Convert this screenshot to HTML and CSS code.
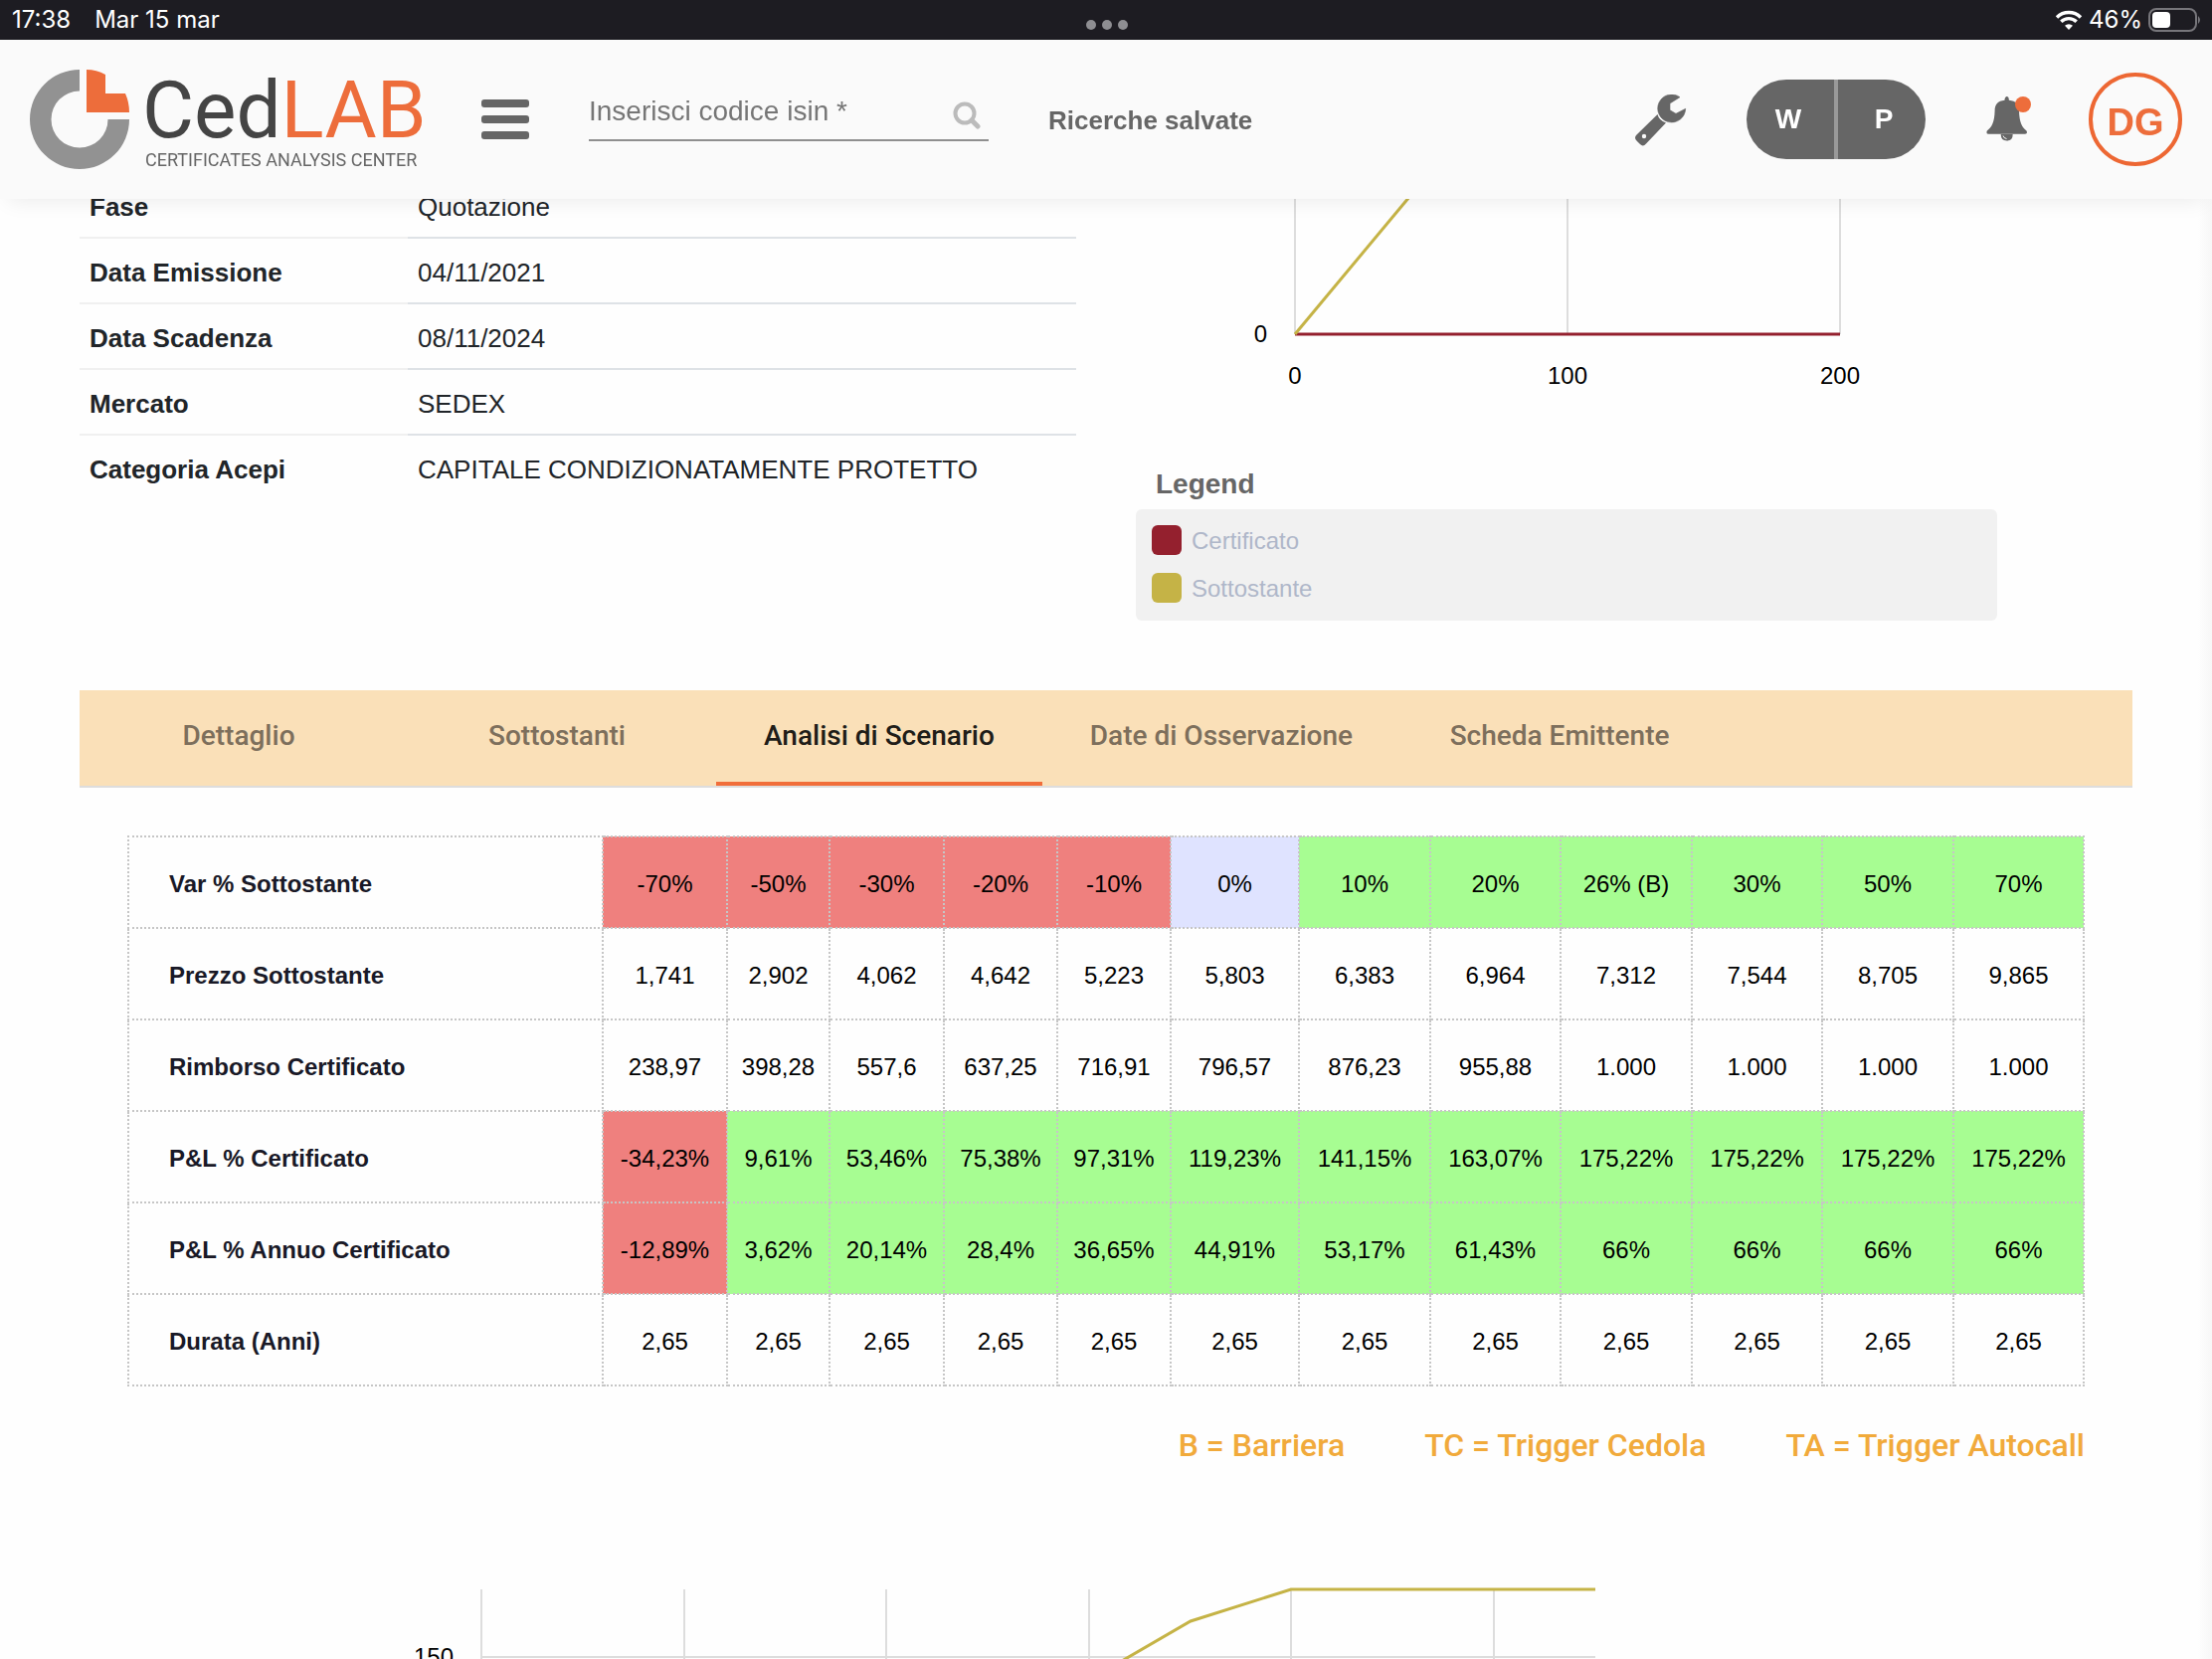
FILE: index.html
```html
<!DOCTYPE html>
<html lang="it">
<head>
<meta charset="utf-8">
<meta name="viewport" content="width=device-width, initial-scale=1">
<title>CedLAB - Analisi di Scenario</title>
<link rel="stylesheet" href="styles.css">
</head>
<body>
<div class="app">
  <div class="status">
    <div class="status-side"><span>17:38</span><span>Mar 15 mar</span></div>
    <svg class="status-dots" viewBox="0 0 44 12" aria-hidden="true"><circle cx="6" cy="6" r="5"/><circle cx="22" cy="6" r="5"/><circle cx="38" cy="6" r="5"/></svg>
    <div class="status-side status-right">
      <svg class="wifi" viewBox="0 0 28 20" aria-hidden="true"><path d="M2 7.500a17 17 0 0 1 24 0M6.300 11.800a11 11 0 0 1 15.400 0" fill="none" stroke="#fff" stroke-width="3.400"/><path d="M14 20l-4-4.200a5.800 5.800 0 0 1 8 0z" fill="#fff"/></svg>
      <span>46%</span>
      <svg class="battery" viewBox="0 0 54 24" aria-hidden="true"><rect x="1" y="1" width="47" height="22" rx="7" fill="none" stroke="#77767b" stroke-width="2"/><rect x="4" y="4" width="18" height="16" rx="4" fill="#fff"/><path d="M50 8q4 4 0 8z" fill="#77767b"/></svg>
    </div>
  </div>

  <header class="header">
    <a class="logo" href="#" aria-label="CedLAB">
      <svg class="logo-mark" viewBox="0 0 100 100" aria-hidden="true"><path d="M50 0A50 50 0 1 0 100 50H78.500A28.500 28.500 0 1 1 50 21.500z" fill="#929292"/><path d="M57 0Q67 0 76 5V24H96Q100 33 100 43H57z" fill="#ed6d3b"/></svg>
      <span class="logo-text"><span class="logo-name">Ced<b>LAB</b></span><span class="logo-tag">CERTIFICATES ANALYSIS CENTER</span></span>
    </a>
    <button class="menu" type="button" aria-label="Menu"><i></i><i></i><i></i></button>
    <form class="search">
      <input type="text" id="isin" placeholder="Inserisci codice isin *" aria-label="Inserisci codice isin">
      <button type="button" aria-label="Cerca"><svg viewBox="0 0 28 28" aria-hidden="true"><circle cx="12" cy="12" r="9.500" fill="none" stroke="#bbb" stroke-width="4"/><path d="M19 19l6 6" stroke="#bbb" stroke-width="5" stroke-linecap="round"/></svg></button>
    </form>
    <a class="saved" href="#">Ricerche salvate</a>
    <div class="tools">
      <button class="wrench" type="button" aria-label="Strumenti"><svg viewBox="0 0 52 52" aria-hidden="true"><path d="M22.500 20Q24 26 31 28.500L11 49.500q-3 3.500-6 .5l-3.500-3.500q-3-3 0-6z" fill="#666"/><circle cx="9" cy="42" r="2.200" fill="#fafafa"/><path d="M45 2.700A14 14 0 1 0 50.700 14.300L41 19.300l-6-3.600V9z" fill="#666" stroke="#666" stroke-width=".6" stroke-linejoin="round"/></svg></button>
      <div class="pill"><button type="button">W</button><button type="button">P</button></div>
      <button class="bell" type="button" aria-label="Notifiche"><svg viewBox="0 0 46 46" aria-hidden="true"><path d="M20.700 0q2 0 2.200 3.700C30 4.500 33 8 33 14.500 33.300 26 36 31 40.500 34.500q1.500 3.200-1.500 3.200H2.500q-3 0-1.700-3.200C5.500 31 8.300 26 8.600 14.500 8.600 8 11.500 4.500 18.500 3.700 18.700 0 20.700 0 20.700 0z" fill="#666"/><path d="M14.700 38q0 6.500 6 6.500t6-6.500z" fill="#666"/><path d="M17 39.500q.5 2.500 3.500 3" fill="none" stroke="#fafafa" stroke-width="1"/><circle cx="37" cy="8" r="8" fill="#ed6d3b"/></svg></button>
      <button class="avatar" type="button">DG</button>
    </div>
  </header>

  <main class="main">
    <section class="top">
      <div class="info-wrap">
        <table class="info">
          <tr><th scope="row">Fase</th><td>Quotazione</td></tr>
          <tr><th scope="row">Data Emissione</th><td>04/11/2021</td></tr>
          <tr><th scope="row">Data Scadenza</th><td>08/11/2024</td></tr>
          <tr><th scope="row">Mercato</th><td>SEDEX</td></tr>
          <tr><th scope="row">Categoria Acepi</th><td>CAPITALE CONDIZIONATAMENTE PROTETTO</td></tr>
        </table>
      </div>
      <div class="payoff">
        <svg class="chart" viewBox="0 0 866 288" role="img" aria-label="Payoff a scadenza">
          <path d="M160 0V162M434 0V162M708 0V162" stroke="#ddd" stroke-width="2"/>
          <path d="M160 162H708" stroke="#94202e" stroke-width="3"/>
          <path d="M160 162L295 0" stroke="#c5b346" stroke-width="3"/>
          <text x="132" y="170" text-anchor="end">0</text>
          <text x="160" y="212" text-anchor="middle">0</text><text x="434" y="212" text-anchor="middle">100</text><text x="708" y="212" text-anchor="middle">200</text>
        </svg>
        <h2>Legend</h2>
        <ul class="legend"><li><i class="cert"></i><span>Certificato</span></li><li><i class="under"></i><span>Sottostante</span></li></ul>
      </div>
    </section>

    <nav class="tabs">
      <button type="button">Dettaglio</button><button type="button">Sottostanti</button><button type="button" class="active">Analisi di Scenario</button><button type="button">Date di Osservazione</button><button type="button">Scheda Emittente</button>
    </nav>

    <section class="scenario">
      <table class="grid">
        <colgroup><col><col class="w125"><col class="w103"><col class="w115"><col class="w114"><col class="w114"><col class="w129"><col class="w132"><col class="w131"><col class="w132"><col class="w131"><col class="w132"><col class="w131"></colgroup>
        <tr><th scope="row">Var % Sottostante</th><td class="neg">-70%</td><td class="neg">-50%</td><td class="neg">-30%</td><td class="neg">-20%</td><td class="neg">-10%</td><td class="zero">0%</td><td class="pos">10%</td><td class="pos">20%</td><td class="pos">26% (B)</td><td class="pos">30%</td><td class="pos">50%</td><td class="pos">70%</td></tr>
        <tr><th scope="row">Prezzo Sottostante</th><td>1,741</td><td>2,902</td><td>4,062</td><td>4,642</td><td>5,223</td><td>5,803</td><td>6,383</td><td>6,964</td><td>7,312</td><td>7,544</td><td>8,705</td><td>9,865</td></tr>
        <tr><th scope="row">Rimborso Certificato</th><td>238,97</td><td>398,28</td><td>557,6</td><td>637,25</td><td>716,91</td><td>796,57</td><td>876,23</td><td>955,88</td><td>1.000</td><td>1.000</td><td>1.000</td><td>1.000</td></tr>
        <tr><th scope="row">P&amp;L % Certificato</th><td class="neg">-34,23%</td><td class="pos">9,61%</td><td class="pos">53,46%</td><td class="pos">75,38%</td><td class="pos">97,31%</td><td class="pos">119,23%</td><td class="pos">141,15%</td><td class="pos">163,07%</td><td class="pos">175,22%</td><td class="pos">175,22%</td><td class="pos">175,22%</td><td class="pos">175,22%</td></tr>
        <tr><th scope="row">P&amp;L % Annuo Certificato</th><td class="neg">-12,89%</td><td class="pos">3,62%</td><td class="pos">20,14%</td><td class="pos">28,4%</td><td class="pos">36,65%</td><td class="pos">44,91%</td><td class="pos">53,17%</td><td class="pos">61,43%</td><td class="pos">66%</td><td class="pos">66%</td><td class="pos">66%</td><td class="pos">66%</td></tr>
        <tr><th scope="row">Durata (Anni)</th><td>2,65</td><td>2,65</td><td>2,65</td><td>2,65</td><td>2,65</td><td>2,65</td><td>2,65</td><td>2,65</td><td>2,65</td><td>2,65</td><td>2,65</td><td>2,65</td></tr>
      </table>
      <div class="notes"><span>B = Barriera</span><span>TC = Trigger Cedola</span><span>TA = Trigger Autocall</span></div>
      <svg class="chart chart-scenario" viewBox="0 0 1968 300" role="img" aria-label="Analisi di scenario">
        <path d="M356 2V300M560 2V300M763 2V300M967 2V300M1170 2V300M1374 2V300M356 70H1476" fill="none" stroke="#ddd" stroke-width="2"/>
        <path d="M967 93L1069 34L1170 2H1476" fill="none" stroke="#c5b346" stroke-width="3"/>
        <text x="328" y="78" text-anchor="end">150</text>
      </svg>
    </section>
  </main>
</div>
</body>
</html>
```
FILE: styles.css
```css
* { box-sizing: border-box; }
body { margin: 0; background: #fefefe; color: #212529; font-family: "Liberation Sans", Arial, sans-serif; font-size: 26px; }
button { margin: 0; padding: 0; border: 0; background: none; font: inherit; color: inherit; cursor: pointer; }
a { color: inherit; text-decoration: none; }
svg { display: block; }
.app { height: 100vh; overflow: hidden; }

.status { display: grid; grid-template-columns: 1fr auto 1fr; align-items: center; height: 40px; padding: 0 10px 0 12px; background: #1d1c22; color: #fff; font: 24px/40px Inter, sans-serif; }
.status-side { display: flex; align-items: center; gap: 24px; }
.status-right { justify-content: flex-end; gap: 6px; }
.status-dots { width: 44px; height: 12px; margin-top: 10px; fill: #8e8e92; }
.wifi { width: 28px; height: 20px; }
.battery { width: 54px; height: 24px; }

.header { position: sticky; top: 0; z-index: 2; display: flex; align-items: center; height: 160px; padding: 0 30px; background: #fafafa; box-shadow: 0 10px 20px -8px rgba(0, 0, 0, .08); }
.logo { display: flex; align-items: center; gap: 13px; }
.logo-mark { width: 100px; height: 100px; }
.logo-text { display: flex; flex-direction: column; width: 281px; padding-top: 2px; white-space: nowrap; }
.logo-name { font: 80px/80px Roboto, sans-serif; color: #444; }
.logo-name b { font-weight: 400; color: #ed6d3b; }
.logo-tag { padding-left: 3px; font: 18px/20px Roboto, sans-serif; color: #666; }
.menu { display: grid; gap: 8px; width: 48px; margin-left: 60px; }
.menu i { height: 8px; border-radius: 3px; background: #666; }
.search { display: flex; align-items: center; width: 402px; height: 58px; margin: 0 0 14px 60px; padding-right: 8px; border-bottom: 2px solid #8f8f8f; }
.search input { flex: 1; min-width: 0; padding: 0; border: 0; outline: 0; background: none; font: 28px "Liberation Sans", Arial, sans-serif; color: #333; }
.search input::placeholder { color: #767676; opacity: 1; }
.search svg { width: 28px; height: 28px; margin-top: 8px; }
.saved { margin-left: 60px; padding-top: 2px; font-weight: 700; color: #666; }
.tools { display: flex; align-items: center; margin-left: auto; }
.wrench svg { width: 52px; height: 52px; margin-top: 2px; }
.pill { display: flex; width: 180px; height: 80px; margin: 0 61px 0 60px; border-radius: 40px; overflow: hidden; background: #666; color: #fff; font-weight: 700; font-size: 28px; }
.pill button { flex: 1; padding-right: 4px; }
.pill button + button { padding: 0 0 0 4px; border-left: 4px solid #999; }
.bell svg { width: 46px; height: 46px; }
.avatar { width: 94px; height: 94px; margin-left: 57px; padding-top: 6px; border: 4px solid #ed6733; border-radius: 50%; font-weight: 700; font-size: 38px; color: #ed6d3b; }

.main { margin-top: -26px; padding: 0 80px; background: linear-gradient(to left, #f7f7f7, #fefefe 14px); }
.top { display: grid; grid-template-columns: 1fr 1fr; }
.info-wrap { padding-right: 30px; }
.info { width: 100%; border-collapse: separate; border-spacing: 0; text-align: left; }
.info th, .info td { height: 66px; padding: 4px 10px 0; border-bottom: 2px solid #dee2e6; line-height: 30px; }
.info th { width: 330px; border-color: #f0f0f0; }
.info tr:last-child > * { border-color: transparent; }
.payoff { padding: 0 136px 0 30px; }
.chart { width: 100%; fill: #000; font-size: 24px; }
.payoff h2 { margin: 0; padding-left: 20px; font-size: 28px; line-height: 50px; color: #666; }
.legend { display: grid; gap: 18px; margin: 0; padding: 16px 16px 18px; border-radius: 6px; background: #f1f1f1; list-style: none; font-size: 24px; color: #afb7c9; }
.legend li { display: flex; align-items: center; gap: 10px; height: 30px; }
.legend i { width: 30px; height: 30px; border-radius: 6px; }
.legend span { padding-top: 2px; }
.cert { background: #94202e; }
.under { background: #c5b346; }

.tabs { display: flex; height: 98px; margin-top: 70px; border-bottom: 2px solid #ddd; background: #fae0b8; font: 500 28px/92px Roboto, sans-serif; }
.tabs button { min-width: 320px; padding: 0 48px; border-bottom: 4px solid transparent; color: #7d6f5c; }
.tabs .active { border-color: #f16e3a; color: #201d18; }

.scenario { padding: 48px 48px 0; }
.grid { width: 100%; table-layout: fixed; border-collapse: collapse; font-size: 24px; text-align: center; color: #000; }
.grid th, .grid td { height: 92px; padding: 4px 0 0; border: 2px dotted #c6c6c6; }
.grid th { padding-left: 40px; text-align: left; color: #191927; }
.neg { background: #ef807e; }
.pos { background: #a7fd92; }
.zero { background: #dfe3ff; }
.w103 { width: 103px; }
.w114 { width: 114px; }
.w115 { width: 115px; }
.w125 { width: 125px; }
.w129 { width: 129px; }
.w131 { width: 131px; }
.w132 { width: 132px; }
.notes { display: flex; justify-content: flex-end; gap: 80px; margin-top: 39px; font: 500 32px/40px Roboto, sans-serif; color: #f1aa3b; }
.chart-scenario { margin-top: 123px; }
```
